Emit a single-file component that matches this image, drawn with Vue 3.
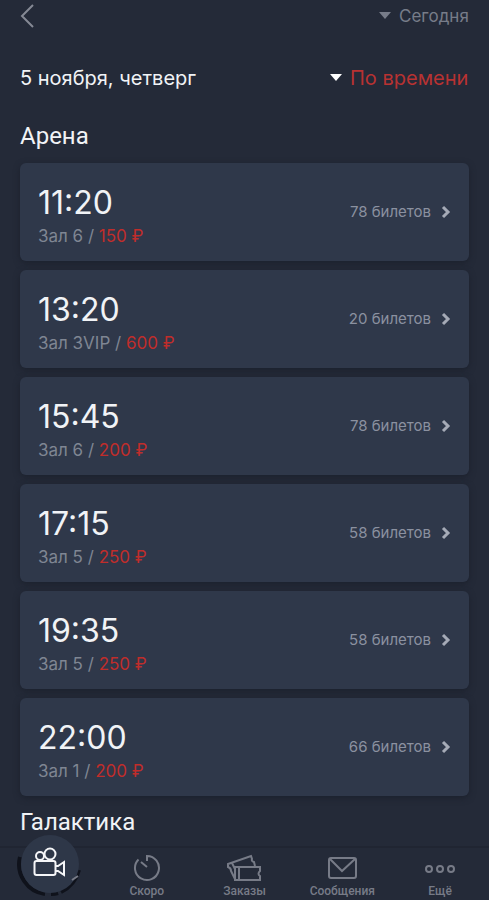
<script setup>
import { ref } from "vue"

const day = ref("Сегодня");
const sorting = ref("По времени");
const activeTab = ref("films");

const sessions = [
    { time: "11:20", hall: "Зал 6", price: 150, tickets: 78 },
    { time: "13:20", hall: "Зал 3VIP", price: 600, tickets: 20 },
    { time: "15:45", hall: "Зал 6", price: 200, tickets: 78 },
    { time: "17:15", hall: "Зал 5", price: 250, tickets: 58 },
    { time: "19:35", hall: "Зал 5", price: 250, tickets: 58 },
    { time: "22:00", hall: "Зал 1", price: 200, tickets: 66 },
];
</script>

<template>
    <div class="page">
        <header class="topbar">
            <button class="back" type="button" aria-label="Назад">
                <svg width="16" height="26" viewBox="0 0 16 26">
                    <path d="M13 2 2 13l11 11" />
                </svg>
            </button>
            <label class="picker">
                <svg width="12" height="8" viewBox="0 0 12 8"><path d="M0 0h12L6 7z" /></svg>
                <select v-model="day" aria-label="День">
                    <option>Сегодня</option>
                    <option>Завтра</option>
                </select>
            </label>
        </header>

        <main class="content">
            <div class="date-row">
                <p class="date">5 ноября, четверг</p>
                <label class="picker picker-sort">
                    <svg width="12" height="8" viewBox="0 0 12 8"><path d="M0 0h12L6 7z" /></svg>
                    <select v-model="sorting" aria-label="Сортировка">
                        <option>По времени</option>
                        <option>По цене</option>
                    </select>
                </label>
            </div>

            <h2 class="cinema">Арена</h2>
            <ul class="sessions">
                <li v-for="s in sessions" :key="s.time">
                    <button class="session" type="button">
                        <span class="info">
                            <span class="time">{{ s.time }}</span>
                            <span class="hall">{{ s.hall }} / <span class="price">{{ s.price }} ₽</span></span>
                        </span>
                        <span class="tickets">{{ s.tickets }} билетов</span>
                        <svg class="chevron" width="10" height="14" viewBox="0 0 10 14">
                            <path d="m2 2 5 5-5 5" />
                        </svg>
                    </button>
                </li>
            </ul>
            <h2 class="cinema">Галактика</h2>
        </main>

        <nav class="tabs">
            <button class="tab" type="button" aria-label="Фильмы" @click="activeTab = 'films'">
                <svg width="64" height="64" viewBox="0 0 64 64">
                    <path class="rim" d="M3 23a30 30 0 0 0 25 37M34 60q4 0 7-1M44 58q14-7 18-22" />
                    <circle class="face" cx="33" cy="30" r="29" />
                    <path class="glint" d="m55 46 6-4" />
                    <g class="camera">
                        <circle cx="23" cy="22" r="4" />
                        <circle cx="33" cy="20" r="5.5" />
                        <rect x="17.5" y="27" width="21" height="14" rx="2" />
                        <path d="M39 32h2l6-4v13l-6-4h-2" />
                    </g>
                </svg>
            </button>
            <button class="tab" type="button" @click="activeTab = 'soon'">
                <svg width="28" height="28" viewBox="0 0 28 28">
                    <path d="M14 7V2a12 12 0 1 1-8.5 3.5M8 8l6 5" />
                </svg>
                <span>Скоро</span>
            </button>
            <button class="tab" type="button" @click="activeTab = 'orders'">
                <svg width="36" height="28" viewBox="0 0 36 28">
                    <path d="M9 25 5 17q0-3-3-4v-3L25 2l1 3q-1 2 2 3l1 4M6 9l3 6" />
                    <path d="M9 13h25v4q-3 3 0 5v4H9zM13 13v13" />
                </svg>
                <span>Заказы</span>
            </button>
            <button class="tab" type="button" @click="activeTab = 'messages'">
                <svg width="30" height="28" viewBox="0 0 30 28">
                    <rect x="2" y="4" width="27" height="20" rx="2" />
                    <path d="m3 5 12 12L28 5" />
                </svg>
                <span>Сообщения</span>
            </button>
            <button class="tab" type="button" @click="activeTab = 'more'">
                <svg width="32" height="28" viewBox="0 0 32 28">
                    <circle cx="5" cy="15" r="3" />
                    <circle cx="16" cy="15" r="3" />
                    <circle cx="27" cy="15" r="3" />
                </svg>
                <span>Ещё</span>
            </button>
        </nav>
    </div>
</template>

<style>
body {
    margin: 0;
    background-color: #242a38;
}
</style>

<style scoped>
.page {
    display: flex;
    flex-direction: column;
    min-height: 100vh;
    background-color: #242a38;
    color: #f1f3f6;
    font-family: Inter, "Noto Sans", sans-serif;
}

button,
select {
    margin: 0;
    padding: 0;
    border: 0;
    background: none;
    color: inherit;
    font: inherit;
    cursor: pointer;
}

svg {
    display: block;
    flex: none;
}

.topbar {
    display: flex;
    align-items: center;
    justify-content: space-between;
    height: 32px;
    padding: 0 20px;
}

.back path {
    fill: none;
    stroke: #858994;
    stroke-width: 2;
}

.picker {
    display: flex;
    align-items: center;
    gap: 8px;
    color: #777c89;
    font-size: 17px;
    line-height: 24px;
}

.picker select {
    appearance: none;
}

.picker path {
    fill: currentColor;
}

.picker-sort {
    color: #fff;
    font-size: 20px;
}

.picker-sort select {
    color: #b83232;
}

.content {
    flex: 1;
    padding: 32px 20px 0;
}

.date-row {
    display: flex;
    align-items: center;
    justify-content: space-between;
    height: 28px;
    margin-bottom: 28px;
}

.date {
    margin: 0;
    font-size: 20px;
    line-height: 24px;
}

.cinema {
    margin: 0;
    font-family: Roboto, sans-serif;
    font-size: 24px;
    font-weight: 400;
    line-height: 32px;
}

.sessions {
    display: flex;
    flex-direction: column;
    gap: 9px;
    margin: 0;
    padding: 11px 0 10px;
    list-style: none;
}

.session {
    display: flex;
    align-items: center;
    box-sizing: border-box;
    width: 100%;
    padding: 14px 18px;
    border-radius: 6px;
    background-color: #2f384a;
    box-shadow: 0 2px 6px #1c212d;
    text-align: left;
}

.info {
    display: flex;
    flex: 1;
    flex-direction: column;
    padding-top: 4px;
}

.time {
    font-size: 32px;
    line-height: 44px;
}

.hall {
    color: #7f8693;
    font-size: 17px;
    line-height: 22px;
}

.price {
    color: #c02d2b;
}

.tickets {
    margin-right: 10px;
    color: #8b91a0;
    font-size: 15px;
    line-height: 20px;
}

.chevron path {
    fill: none;
    stroke: #a5aab6;
    stroke-width: 3;
}

.tabs {
    position: sticky;
    bottom: 0;
    display: flex;
    height: 54px;
    border-top: 2px solid #202532;
    box-sizing: border-box;
    background-color: #242a38;
}

.tab {
    display: flex;
    flex: 1 1 0;
    flex-direction: column;
    align-items: center;
    justify-content: flex-end;
    gap: 2px;
    padding-bottom: 2px;
    color: #777b87;
    font-family: Roboto, sans-serif;
    font-size: 12px;
    font-weight: 500;
    line-height: 14px;
}

.tab path,
.tab circle,
.tab rect {
    fill: none;
    stroke: currentColor;
    stroke-width: 2;
}

.tab .rim {
    stroke: #0f121b;
    stroke-width: 4;
}

.tab .face {
    fill: #2e3748;
    stroke: none;
}

.tab .glint {
    stroke: #777b87;
}

.camera {
    color: #f5f6f8;
}
</style>
